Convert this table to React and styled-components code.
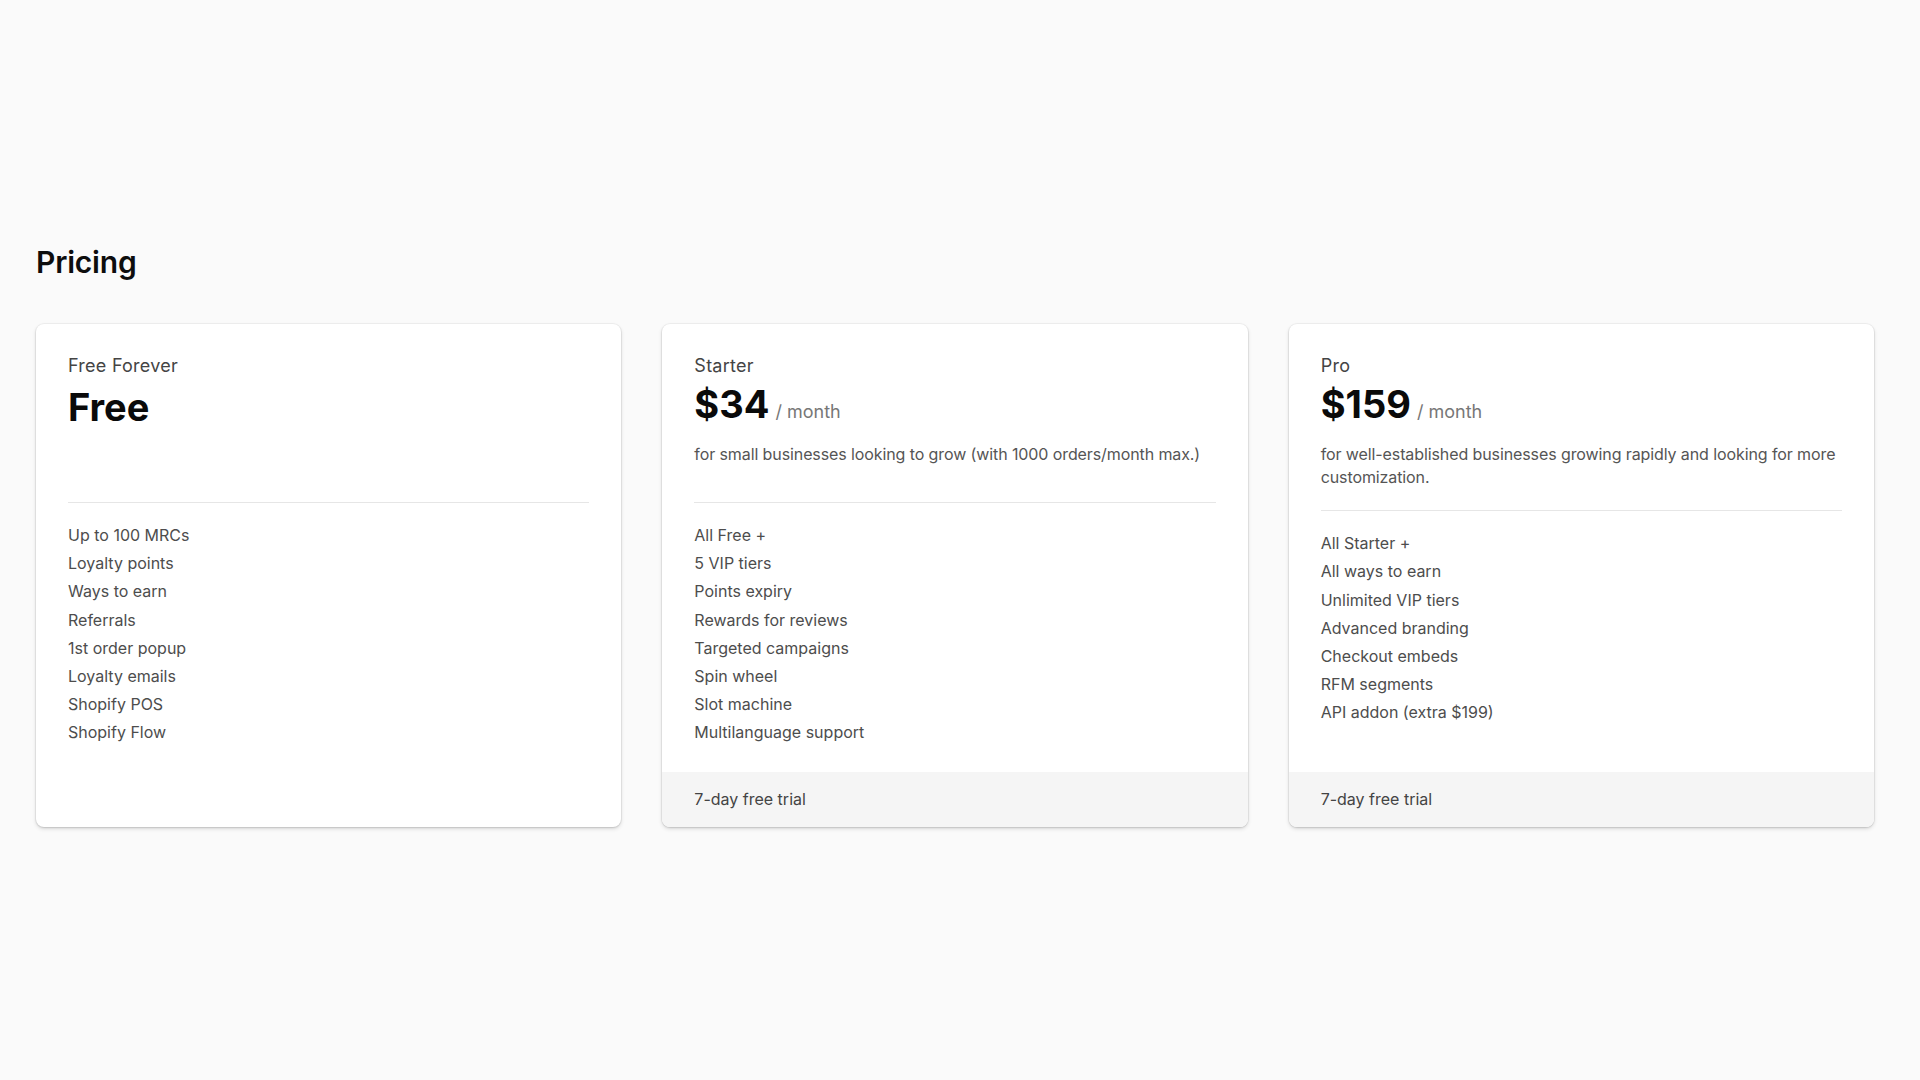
import React from "react"
import styled, { createGlobalStyle } from "styled-components"

// -----------------------------------------------------------------------------
// Data
// -----------------------------------------------------------------------------

const plans = [
  {
    name: "Free Forever",
    price: "Free",
    features: [
      "Up to 100 MRCs",
      "Loyalty points",
      "Ways to earn",
      "Referrals",
      "1st order popup",
      "Loyalty emails",
      "Shopify POS",
      "Shopify Flow",
    ],
  },
  {
    name: "Starter",
    price: "$34",
    period: "/ month",
    description:
      "for small businesses looking to grow (with 1000 orders/month max.)",
    features: [
      "All Free +",
      "5 VIP tiers",
      "Points expiry",
      "Rewards for reviews",
      "Targeted campaigns",
      "Spin wheel",
      "Slot machine",
      "Multilanguage support",
    ],
    footer: "7-day free trial",
  },
  {
    name: "Pro",
    price: "$159",
    period: "/ month",
    description:
      "for well-established businesses growing rapidly and looking for more customization.",
    features: [
      "All Starter +",
      "All ways to earn",
      "Unlimited VIP tiers",
      "Advanced branding",
      "Checkout embeds",
      "RFM segments",
      "API addon (extra $199)",
    ],
    footer: "7-day free trial",
  },
]

// -----------------------------------------------------------------------------
// Styles
// -----------------------------------------------------------------------------

const GlobalStyle = createGlobalStyle`
  html, body {
    margin: 0;
    background: #fafafa;
    font-family: Inter, "Noto Sans", "Liberation Sans", sans-serif;
    color: #111;
  }
  * {
    box-sizing: border-box;
  }
`

const Page = styled.main`
  padding: 244px 46px 0 36px;
  min-height: 1080px;
`

const Title = styled.h1`
  margin: 0 0 44px;
  font-size: 30px;
  line-height: 36px;
  font-weight: 600;
  letter-spacing: -0.2px;
  color: #0d0d0d;
`

const Grid = styled.div`
  display: grid;
  grid-template-columns: repeat(3, 1fr);
  gap: 41px;
`

const Card = styled.section`
  display: flex;
  flex-direction: column;
  background: #fff;
  border-radius: 8px;
  overflow: hidden;
  box-shadow: 0 0 0 1px rgba(0, 0, 0, 0.04), 0 1px 2px rgba(0, 0, 0, 0.1),
    0 2px 4px rgba(0, 0, 0, 0.12);
`

const Header = styled.div`
  min-height: 178px;
  padding: 28px 32px 22px;
`

const Divider = styled.hr`
  margin: 0 32px;
  border: 0;
  border-top: 1px solid #e6e6e6;
`

const PlanName = styled.div`
  font-size: 18px;
  line-height: 27px;
  letter-spacing: 0.25px;
  color: #444;
`

const PriceRow = styled.div`
  display: flex;
  align-items: baseline;
  gap: 6px;
  margin-top: ${({ $free }) => ($free ? "6px" : "3px")};
`

const Price = styled.span`
  font-size: 38px;
  line-height: 44px;
  font-weight: 700;
  color: #0a0a0a;
`

const Period = styled.span`
  font-size: 18px;
  color: #777;
`

const Description = styled.p`
  margin: 17px 0 0;
  font-size: 16px;
  line-height: 22.6px;
  letter-spacing: -0.1px;
  color: #555;
`

const Features = styled.ul`
  list-style: none;
  margin: 0;
  padding: 18px 32px 25px;
  flex: 1;
`

const Feature = styled.li`
  font-size: 16px;
  line-height: 28.2px;
  color: #4d4d4d;
`

const Footer = styled.div`
  height: 55px;
  display: flex;
  align-items: center;
  padding: 0 32px;
  background: #f5f5f5;
  font-size: 16px;
  color: #444;
`

// -----------------------------------------------------------------------------
// Components
// -----------------------------------------------------------------------------

const PlanCard = ({ plan }) => (
  <Card>
    <Header>
      <PlanName>{plan.name}</PlanName>
      <PriceRow $free={!plan.period}>
        <Price>{plan.price}</Price>
        {plan.period && <Period>{plan.period}</Period>}
      </PriceRow>
      {plan.description && <Description>{plan.description}</Description>}
    </Header>
    <Divider />
    <Features>
      {plan.features.map((feature) => (
        <Feature key={feature}>{feature}</Feature>
      ))}
    </Features>
    {plan.footer && <Footer>{plan.footer}</Footer>}
  </Card>
)

const App = () => (
  <>
    <GlobalStyle />
    <Page>
      <Title>Pricing</Title>
      <Grid>
        {plans.map((plan) => (
          <PlanCard key={plan.name} plan={plan} />
        ))}
      </Grid>
    </Page>
  </>
)

export default App
